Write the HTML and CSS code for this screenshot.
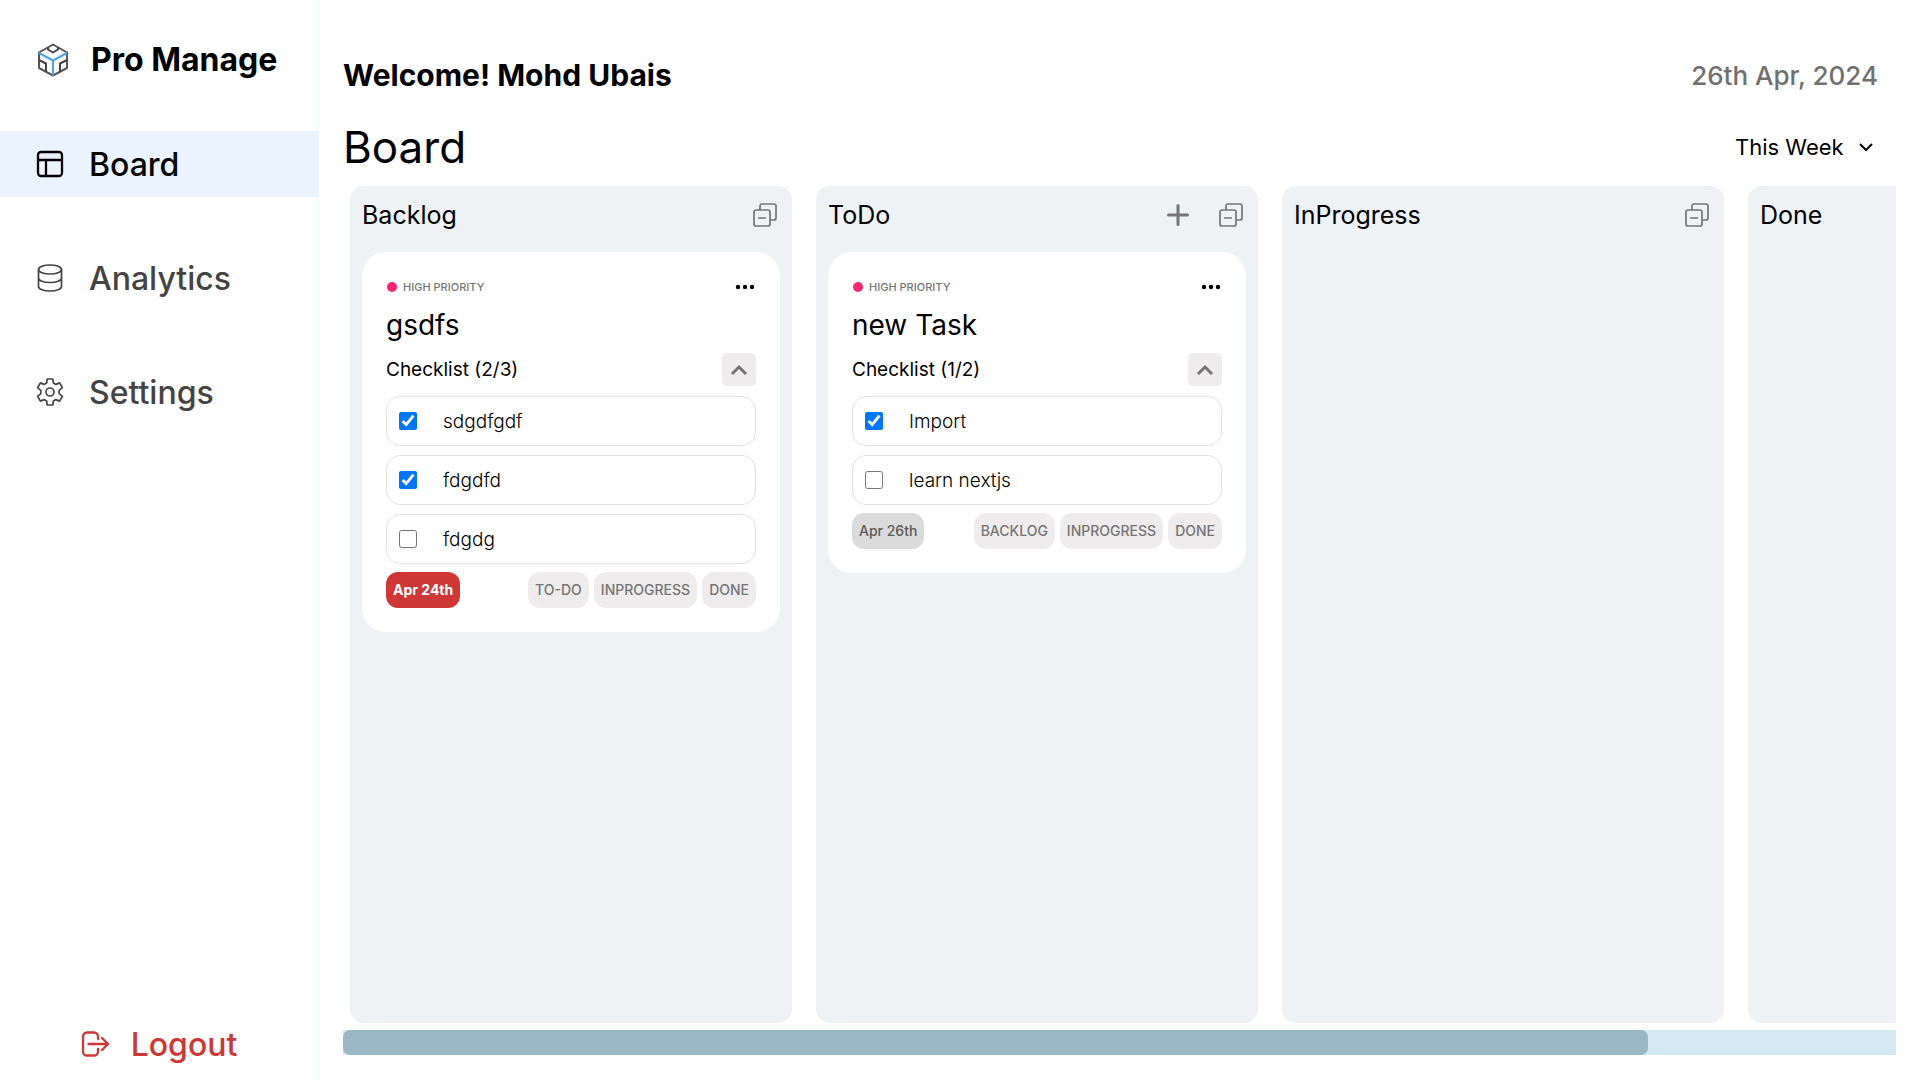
FILE: index.html
```html
<!DOCTYPE html>
<html lang="en">
<head>
<meta charset="utf-8">
<meta name="viewport" content="width=device-width, initial-scale=1">
<title>Pro Manage</title>
<link rel="stylesheet" href="styles.css">
</head>
<body>
<svg class="sprite" aria-hidden="true">
  <symbol id="collapse" viewBox="0 0 24 24">
    <rect x="1" y="7" width="16" height="16" rx="2"/>
    <path d="M7 7V3a2 2 0 0 1 2-2h12a2 2 0 0 1 2 2v12a2 2 0 0 1-2 2h-4M5 15h8"/>
  </symbol>
  <symbol id="dots" viewBox="0 0 20 6">
    <circle cx="3" cy="3" r="2.200"/><circle cx="10" cy="3" r="2.200"/><circle cx="17" cy="3" r="2.200"/>
  </symbol>
  <symbol id="chevron-up" viewBox="0 0 18 12">
    <path d="M2 10l7-7 7 7"/>
  </symbol>
</svg>
<div class="app">
  <aside class="sidebar">
    <div class="brand">
      <svg class="brand-icon" viewBox="0 0 32 34" aria-hidden="true">
        <g fill="none" stroke-width="2" stroke-linejoin="round">
          <path stroke="#555" d="M16 1.500L30 9.500V25L16 32.500L2 25V9.500Z"/>
          <path stroke="#444" d="M11 4.500v2l5 3 5-3v-2M2 17l7 3.500v8M30 17l-7 3.500v8"/>
          <path stroke="#4ea3e6" d="M2 10l14 7.500L30 10M16 17.500v15"/>
        </g>
      </svg>
      <span class="brand-name">Pro Manage</span>
    </div>
    <nav class="nav">
      <a class="nav-link active" href="#board">
        <svg class="nav-icon bold" viewBox="0 0 28 28" aria-hidden="true"><rect x="2" y="2" width="24" height="24" rx="3"/><path d="M2 10h24M10 10v16"/></svg>
        Board
      </a>
      <a class="nav-link" href="#analytics">
        <svg class="nav-icon" viewBox="0 0 28 28" aria-hidden="true"><ellipse cx="14" cy="5.500" rx="11.500" ry="4.500"/><path d="M2.500 5.500v17c0 2.500 5 4.500 11.500 4.500s11.500-2 11.500-4.500v-17M2.500 14c0 2.500 5 4.500 11.500 4.500s11.500-2 11.500-4.500"/></svg>
        Analytics
      </a>
      <a class="nav-link" href="#settings">
        <svg class="nav-icon" viewBox="0 0 28 28" aria-hidden="true"><circle cx="14" cy="14" r="4"/><path stroke-linejoin="round" d="M11.200 1h5.600l.6 4 2.400 1.400 3.800-1.500 2.800 4.800-3.200 2.600v3.400l3.200 2.600-2.800 4.800-3.800-1.500-2.400 1.400-.6 4h-5.600l-.6-4-2.400-1.400-3.800 1.500-2.800-4.800 3.200-2.600v-3.400L1.600 9.700l2.800-4.800 3.800 1.500L10.600 5z"/></svg>
        Settings
      </a>
    </nav>
    <button class="logout" type="button">
      <svg class="logout-icon" viewBox="0 0 28 26" aria-hidden="true"><path d="M17 8V5.500A4 4 0 0 0 13 1.500H6a4 4 0 0 0-4 4v15a4 4 0 0 0 4 4h7a4 4 0 0 0 4-4V18M7.500 13H27M21 7l6 6-6 6"/></svg>
      Logout
    </button>
  </aside>

  <main class="main">
    <header class="topbar">
      <p class="welcome">Welcome! Mohd Ubais</p>
      <p class="today">26th Apr, 2024</p>
    </header>
    <div class="titlebar">
      <h1 class="title">Board</h1>
      <div class="range">
        <select class="range-select" aria-label="Period"><option>This Week</option></select>
        <svg class="range-arrow" viewBox="0 0 14 10" aria-hidden="true"><path d="M1 2l6 6 6-6"/></svg>
      </div>
    </div>

    <div class="board" id="board">
      <section class="column">
        <header class="column-head">
          <h2 class="column-title">Backlog</h2>
          <button class="icon-button" type="button" aria-label="Collapse all"><svg class="collapse-icon"><use href="#collapse"/></svg></button>
        </header>
        <article class="card">
          <div class="card-top">
            <span class="priority">HIGH PRIORITY</span>
            <button class="icon-button" type="button" aria-label="More"><svg class="dots-icon"><use href="#dots"/></svg></button>
          </div>
          <h3 class="card-title">gsdfs</h3>
          <div class="checklist-head">
            <span>Checklist (2/3)</span>
            <button class="toggle" type="button" aria-label="Toggle checklist"><svg class="toggle-icon"><use href="#chevron-up"/></svg></button>
          </div>
          <div class="checklist">
            <label class="item"><input class="check" type="checkbox" checked>sdgdfgdf</label>
            <label class="item"><input class="check" type="checkbox" checked>fdgdfd</label>
            <label class="item"><input class="check" type="checkbox">fdgdg</label>
          </div>
          <footer class="card-foot">
            <span class="chip overdue">Apr 24th</span>
            <button class="chip" type="button">TO-DO</button>
            <button class="chip" type="button">INPROGRESS</button>
            <button class="chip" type="button">DONE</button>
          </footer>
        </article>
      </section>

      <section class="column">
        <header class="column-head">
          <h2 class="column-title">ToDo</h2>
          <button class="icon-button" type="button" aria-label="Add task"><svg class="plus-icon" viewBox="0 0 22 22"><path d="M11 1.500v19M1.500 11h19"/></svg></button>
          <button class="icon-button" type="button" aria-label="Collapse all"><svg class="collapse-icon"><use href="#collapse"/></svg></button>
        </header>
        <article class="card">
          <div class="card-top">
            <span class="priority">HIGH PRIORITY</span>
            <button class="icon-button" type="button" aria-label="More"><svg class="dots-icon"><use href="#dots"/></svg></button>
          </div>
          <h3 class="card-title">new Task</h3>
          <div class="checklist-head">
            <span>Checklist (1/2)</span>
            <button class="toggle" type="button" aria-label="Toggle checklist"><svg class="toggle-icon"><use href="#chevron-up"/></svg></button>
          </div>
          <div class="checklist">
            <label class="item"><input class="check" type="checkbox" checked>Import</label>
            <label class="item"><input class="check" type="checkbox">learn nextjs</label>
          </div>
          <footer class="card-foot">
            <span class="chip due">Apr 26th</span>
            <button class="chip" type="button">BACKLOG</button>
            <button class="chip" type="button">INPROGRESS</button>
            <button class="chip" type="button">DONE</button>
          </footer>
        </article>
      </section>

      <section class="column">
        <header class="column-head">
          <h2 class="column-title">InProgress</h2>
          <button class="icon-button" type="button" aria-label="Collapse all"><svg class="collapse-icon"><use href="#collapse"/></svg></button>
        </header>
      </section>

      <section class="column">
        <header class="column-head">
          <h2 class="column-title">Done</h2>
          <button class="icon-button" type="button" aria-label="Collapse all"><svg class="collapse-icon"><use href="#collapse"/></svg></button>
        </header>
      </section>
    </div>
    <div class="scrollbar" role="scrollbar" aria-controls="board" aria-orientation="horizontal" aria-valuenow="0">
      <div class="scrollbar-thumb"></div>
    </div>
  </main>
</div>
</body>
</html>
```
FILE: styles.css
```css
* {
  box-sizing: border-box;
  margin: 0;
}

body {
  font-family: Inter, "Open Sans", sans-serif;
  color: #000;
  background: #fff;
}

button {
  padding: 0;
  border: 0;
  background: none;
  color: inherit;
  font: inherit;
  cursor: pointer;
}

svg {
  display: block;
  fill: none;
  stroke: currentColor;
}

.sprite {
  display: none;
}

.app {
  display: flex;
  height: 100vh;
}

/* Sidebar */
.sidebar {
  display: flex;
  flex: 0 0 319px;
  flex-direction: column;
  padding: 36px 0 12px;
  border-right: 1px solid #edf5fe;
}

.brand {
  display: flex;
  align-items: center;
  gap: 22px;
  height: 47px;
  padding-left: 37px;
}

.brand-icon {
  width: 32px;
  height: 34px;
}

.brand-name {
  font-size: 32px;
  font-weight: 700;
  line-height: 46px;
}

.nav {
  display: flex;
  flex-direction: column;
  gap: 48px;
  margin-top: 48px;
}

.nav-link {
  display: flex;
  align-items: center;
  gap: 25px;
  height: 66px;
  padding-left: 36px;
  color: #444;
  font-size: 32px;
  font-weight: 500;
  text-decoration: none;
}

.nav-link.active {
  color: #000;
  background: #ebf3fe;
}

.nav-icon {
  width: 28px;
  height: 28px;
  stroke-width: 1.7;
}

.nav-icon.bold {
  stroke-width: 2.3;
}

.logout {
  display: flex;
  align-items: center;
  align-self: center;
  gap: 22px;
  height: 48px;
  margin-top: auto;
  color: #cf3636;
  font-size: 32px;
  font-weight: 500;
}

.logout-icon {
  width: 28px;
  height: 26px;
  stroke-width: 2.3;
  stroke-linecap: round;
  stroke-linejoin: round;
}

/* Main area */
.main {
  display: flex;
  flex: 1;
  flex-direction: column;
  min-width: 0;
  padding: 51px 24px 25px;
}

.topbar,
.titlebar {
  display: flex;
  align-items: center;
  justify-content: space-between;
  padding-right: 18px;
}

.topbar {
  height: 48px;
}

.welcome {
  font-size: 30px;
  font-weight: 700;
}

.today {
  color: #707070;
  font-size: 26px;
  font-weight: 500;
}

.titlebar {
  height: 72px;
  margin-bottom: 15px;
  padding-top: 24px;
}

.title {
  font-size: 44px;
  font-weight: 400;
}

.range {
  display: grid;
  align-items: center;
}

.range-select,
.range-arrow {
  grid-area: 1 / 1;
}

.range-select {
  padding: 0 34px 0 0;
  border: 0;
  background: none;
  color: #000;
  font: inherit;
  font-size: 22px;
  appearance: none;
}

.range-arrow {
  justify-self: end;
  width: 14px;
  height: 10px;
  margin-right: 5px;
  stroke-width: 2;
  pointer-events: none;
}

/* Board */
.board {
  display: flex;
  flex: 1;
  gap: 24px;
  min-height: 0;
  padding: 0 7px 7px;
  overflow-x: auto;
  scrollbar-width: none;
}

.scrollbar {
  height: 25px;
  background: #d5e9f2;
}

.scrollbar-thumb {
  width: 84%;
  height: 100%;
  border-radius: 7px;
  background: #9bb6c4;
}

.column {
  flex: 0 0 442px;
  padding: 0 12px;
  border-radius: 14px;
  background: #eef2f5;
}

.column-head {
  display: flex;
  align-items: center;
  gap: 30px;
  height: 58px;
  margin-bottom: 8px;
  padding-right: 3px;
  color: #767575;
}

.column-title {
  margin-right: auto;
  color: #000;
  font-size: 25px;
  font-weight: 400;
}

.collapse-icon {
  width: 24px;
  height: 24px;
  stroke-width: 1.7;
}

.plus-icon {
  width: 22px;
  height: 22px;
  stroke-width: 3;
  stroke-linecap: round;
}

.card {
  padding: 24px;
  border-radius: 24px;
  background: #fff;
}

.card-top,
.checklist-head {
  display: flex;
  align-items: center;
  justify-content: space-between;
}

.card-top {
  height: 22px;
  padding-right: 1px;
}

.priority {
  display: flex;
  align-items: center;
  gap: 6px;
  color: #767575;
  font-size: 11px;
  font-weight: 500;
}

.priority::before {
  width: 10px;
  height: 10px;
  margin-left: 1px;
  border-radius: 50%;
  background: #ff2473;
  content: "";
}

.dots-icon {
  width: 20px;
  height: 6px;
  fill: currentColor;
  stroke: none;
}

.card-title {
  margin: 8px 0;
  font-size: 28px;
  font-weight: 400;
  line-height: 39px;
}

.checklist-head {
  height: 33px;
  font-size: 19px;
}

.toggle {
  display: grid;
  place-items: center;
  width: 34px;
  height: 33px;
  border-radius: 5px;
  background: #eeecec;
  color: #767575;
}

.toggle-icon {
  width: 18px;
  height: 12px;
  stroke-width: 3;
}

.checklist {
  display: flex;
  flex-direction: column;
  gap: 9px;
  margin: 10px 0 8px;
}

.item {
  display: flex;
  align-items: center;
  gap: 26px;
  height: 50px;
  padding-left: 12px;
  border: 1px solid #e2e2e2;
  border-radius: 14px;
  font-size: 19px;
  font-weight: 300;
}

.check {
  width: 18px;
  height: 18px;
}

.card-foot {
  display: flex;
  gap: 5px;
}

.chip {
  height: 36px;
  padding: 0 7px;
  border-radius: 12px;
  background: #eeecec;
  color: #767575;
  font-size: 14px;
  font-weight: 500;
  line-height: 36px;
}

.chip.due,
.chip.overdue {
  margin-right: auto;
}

.chip.due {
  background: #dbdbdb;
  color: #5a5a5a;
}

.chip.overdue {
  background: #cf3636;
  color: #fff;
  font-weight: 700;
}
```
